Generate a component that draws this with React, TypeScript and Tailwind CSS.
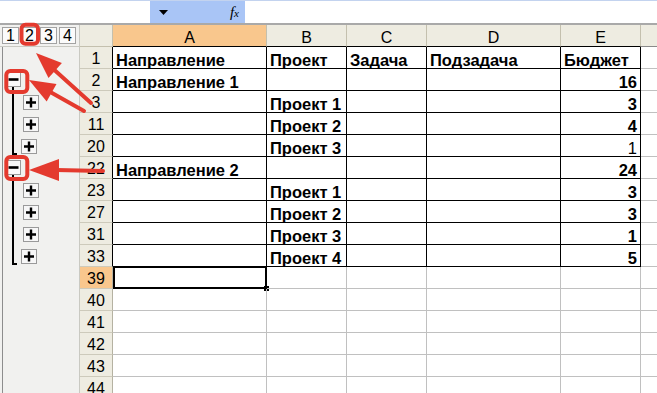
import React from 'react'

const cols = [
  { key: 'a', label: 'A', w: 'w-[154px]' },
  { key: 'b', label: 'B', w: 'w-[80px]' },
  { key: 'c', label: 'C', w: 'w-[80px]' },
  { key: 'd', label: 'D', w: 'w-[134px]' },
  { key: 'e', label: 'E', w: 'w-[80px]' },
]

type Outline = 'none' | 'minus' | 'plus' | 'plusLast'

type Row = {
  n: number
  cells?: Record<string, string>
  outline: Outline
  table?: boolean
  thinE?: boolean
  header?: boolean
}

const rows: Row[] = [
  { n: 1, header: true, table: true, outline: 'none', cells: { a: 'Направление', b: 'Проект', c: 'Задача', d: 'Подзадача', e: 'Бюджет' } },
  { n: 2, table: true, outline: 'minus', cells: { a: 'Направление 1', e: '16' } },
  { n: 3, table: true, outline: 'plus', cells: { b: 'Проект 1', e: '3' } },
  { n: 11, table: true, outline: 'plus', cells: { b: 'Проект 2', e: '4' } },
  { n: 20, table: true, outline: 'plusLast', thinE: true, cells: { b: 'Проект 3', e: '1' } },
  { n: 22, table: true, outline: 'minus', cells: { a: 'Направление 2', e: '24' } },
  { n: 23, table: true, outline: 'plus', cells: { b: 'Проект 1', e: '3' } },
  { n: 27, table: true, outline: 'plus', cells: { b: 'Проект 2', e: '3' } },
  { n: 31, table: true, outline: 'plus', cells: { b: 'Проект 3', e: '1' } },
  { n: 33, table: true, outline: 'plusLast', cells: { b: 'Проект 4', e: '5' } },
  { n: 39, outline: 'none' },
  { n: 40, outline: 'none' },
  { n: 41, outline: 'none' },
  { n: 42, outline: 'none' },
  { n: 43, outline: 'none' },
  { n: 44, outline: 'none' },
]

function PlusBox() {
  return (
    <svg width="16" height="15" viewBox="0 0 16 15" className="shrink-0">
      <rect x="0.5" y="0.5" width="15" height="14" fill="#f7f7f7" stroke="#9a9a9a" />
      <path d="M3 7.5h10M8 2.5v10" stroke="#000" strokeWidth="2.4" />
    </svg>
  )
}

function MinusBox() {
  return (
    <svg width="15" height="15" viewBox="0 0 15 15" className="shrink-0">
      <rect x="0.5" y="0.5" width="14" height="14" fill="#fafafa" stroke="#9a9a9a" />
      <path d="M2.5 7.5h10" stroke="#000" strokeWidth="2.6" />
    </svg>
  )
}

function OutlineCell({ kind }: { kind: Outline }) {
  return (
    <div className="w-[80px] shrink-0 h-full bg-[#f1f1ef] border-r border-[#c9c9c2] flex">
      <div className="ml-[2px] w-px h-full bg-[#8d8d8d]" />
      {kind === 'minus' && (
        <div className="ml-[3px] flex flex-col h-full">
          <div className="mt-[3px]">
            <MinusBox />
          </div>
          <div className="ml-[6px] flex-1 border-l-2 border-black" />
        </div>
      )}
      {(kind === 'plus' || kind === 'plusLast') && (
        <div className="ml-[9px] flex items-center h-full">
          {kind === 'plus' ? (
            <div className="h-full border-l-2 border-black" />
          ) : (
            <div className="h-[20px] w-[5px] self-start border-l-2 border-b-2 border-black" />
          )}
          <div className={kind === 'plus' ? 'ml-[9px]' : 'ml-[4px]'}>
            <PlusBox />
          </div>
        </div>
      )}
    </div>
  )
}

export default function App() {
  return (
    <div className="relative w-[657px] h-[393px] overflow-hidden bg-white font-['Liberation_Sans',Arial,sans-serif] text-black">
      {/* formula bar */}
      <div className="h-[25px] flex border-b-2 border-[#a9a9a9] border-t border-t-[#c3d3ef]">
        <div className="w-[150px] bg-white" />
        <div className="w-[95px] bg-[#a9c5f6] flex items-center">
          <svg width="9" height="5" viewBox="0 0 9 5" className="ml-[9px]">
            <path d="M0 0h9L4.5 5z" fill="#000" />
          </svg>
          <span className="ml-auto mr-[6px] font-['Liberation_Serif',serif] italic text-[15px] leading-none">
            f<span className="text-[11px]">x</span>
          </span>
        </div>
        <div className="flex-1 bg-white" />
      </div>

      {/* column headers */}
      <div className="h-[22px] flex text-[16px]">
        <div className="w-[80px] shrink-0 bg-[#f1f1ef] border-r border-b border-[#c9c9c2] flex items-center gap-[2px] pl-[2px]">
          {[1, 2, 3, 4].map((l) => (
            <div key={l} className="w-[17px] h-[17px] border border-[#a3a3a3] bg-[#fbfbfb] flex items-center justify-center text-[16px] leading-none">
              {l}
            </div>
          ))}
        </div>
        <div className="w-[33px] shrink-0 bg-[#eeece1] border-r border-b border-[#c4c0ae]" />
        {cols.map((c) => (
          <div
            key={c.key}
            className={`${c.w} shrink-0 border-r border-[#c4c0ae] border-b border-b-black flex items-end justify-center leading-[16px] ${
              c.key === 'a' ? 'bg-[#f9c78d]' : 'bg-[#eeece1]'
            }`}
          >
            {c.label}
          </div>
        ))}
        <div className="flex-1 bg-[#eeece1] border-b border-[#8a8a8a]" />
      </div>

      {/* rows */}
      {rows.map((r) => {
        const line = r.table ? 'border-black' : 'border-[#c0c0c0]'
        return (
          <div key={r.n} className="h-[22px] flex text-[16px]">
            <OutlineCell kind={r.outline} />
            <div
              className={`w-[33px] shrink-0 border-b border-[#cdcabb] border-r ${r.table ? 'border-r-black' : 'border-r-[#b5b2a2]'} flex items-end justify-center leading-[18px] ${
                r.n === 39 ? 'bg-[#f9c78d]' : 'bg-[#eeece1]'
              }`}
            >
              {r.n}
            </div>
            {cols.map((c) => {
              const v = r.cells?.[c.key]
              const right = c.key === 'e' && !r.header
              const bold = !(c.key === 'e' && r.thinE)
              return (
                <div
                  key={c.key}
                  className={`${c.w} shrink-0 relative border-r border-b ${line} flex items-end text-[16.5px] leading-[15px] whitespace-nowrap ${
                    right ? 'justify-end pr-[3px]' : 'pl-[3px]'
                  } ${bold ? 'font-bold' : ''}`}
                >
                  {v}
                  {r.n === 39 && c.key === 'a' && (
                    <>
                      <div className="absolute -top-px left-0 -right-px -bottom-px border-2 border-black" />
                      <div className="absolute -right-[3px] -bottom-[3px] w-[5px] h-[5px] bg-black" />
                    </>
                  )}
                </div>
              )
            })}
            <div className="flex-1 border-b border-[#c0c0c0]" />
          </div>
        )
      })}

      {/* annotations */}
      <svg className="absolute inset-0 pointer-events-none" width="657" height="393" viewBox="0 0 657 393">
        <g fill="none" stroke="#e43a2e" strokeWidth="4">
          <rect x="21.5" y="24.7" width="16.5" height="19" rx="4" />
          <rect x="6.3" y="71" width="21" height="21" rx="4" />
          <rect x="6.3" y="157" width="21" height="22" rx="4" />
        </g>
        <g stroke="#e43a2e" strokeWidth="4" strokeLinecap="round">
          <path d="M55 70.5L91 103" />
          <path d="M51.6 92.8L84 111" />
          <path d="M56 170L103 171" />
        </g>
        <g fill="#e43a2e">
          <path d="M36 53L61.9 63.1L48.5 77.9z" />
          <path d="M29 80L56.5 84.1L46.7 101.5z" />
          <path d="M29 170L59 159L59 181z" />
        </g>
      </svg>
    </div>
  )
}
